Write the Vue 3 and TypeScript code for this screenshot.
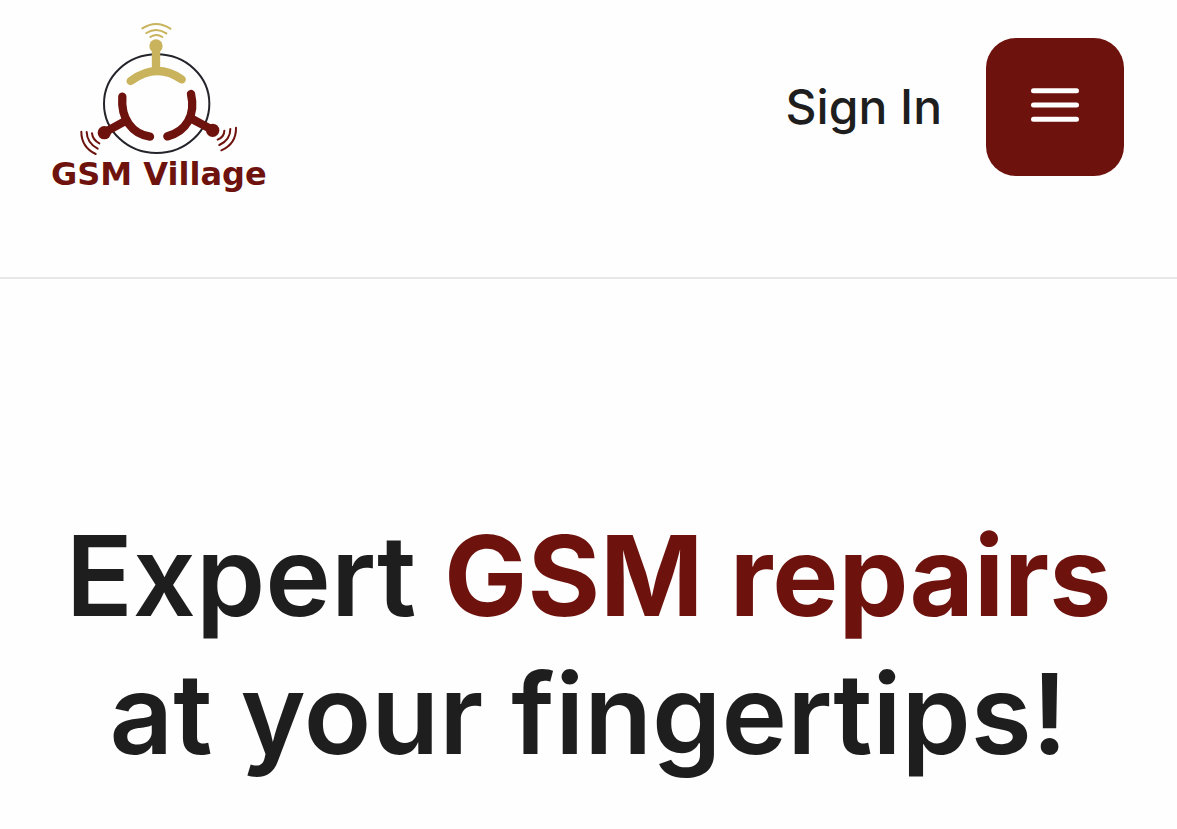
<script setup lang="ts">
import { ref } from 'vue'

const menuOpen = ref<boolean>(false)
</script>

<template>
  <div class="page">
    <header class="header">
      <a class="logo" href="#" aria-label="GSM Village">
        <svg class="logo-mark" viewBox="33 36 642 402" fill="none" stroke-linecap="round" aria-hidden="true">
          <ellipse cx="350" cy="281" rx="158" ry="148" stroke="#24242b" stroke-width="6" />
          <g stroke="#c9b45d">
            <path d="M272 213Q349 156 425 208" stroke-width="25" />
            <path d="M348 112V184" stroke-width="25" stroke-linecap="butt" />
            <circle cx="348" cy="108" r="20" fill="#c9b45d" stroke="none" />
            <path d="M307 55Q349 28 391 56M319 69Q349 50 379 70M331 81Q349 69 367 81" stroke-width="6" />
          </g>
          <g stroke="#6d120c">
            <path d="M247 260C242 326 276 372 330 380" stroke-width="25" />
            <path d="M254 334L194 367" stroke-width="25" stroke-linecap="butt" />
            <circle cx="193" cy="368" r="20" fill="#6d120c" stroke="none" />
            <path d="M124 365Q124 411 167 432M140 366Q141 399 173 416M156 370Q158 389 178 400" stroke-width="6" />
            <path d="M453 252C468 316 438 365 382 379" stroke-width="25" />
            <path d="M456 327L520 361" stroke-width="25" stroke-linecap="butt" />
            <circle cx="518" cy="361" r="20" fill="#6d120c" stroke="none" />
            <path d="M588 353Q589 401 544 421M571 357Q571 390 538 405M553 362Q553 380 533 389" stroke-width="6" />
          </g>
        </svg>
        <span class="logo-name">GSM Village</span>
      </a>
      <nav class="actions">
        <a class="sign-in" href="#">Sign In</a>
        <button
          class="menu-button"
          type="button"
          aria-label="Menu"
          :aria-expanded="menuOpen"
          @click="menuOpen = !menuOpen"
        >
          <svg class="menu-icon" viewBox="0 0 48 34" aria-hidden="true">
            <path d="M2.5 2.7H45.5M2.5 17H45.5M2.5 31.3H45.5" stroke="#fff" stroke-width="5" stroke-linecap="round" />
          </svg>
        </button>
      </nav>
    </header>
    <main class="hero">
      <h1 class="title">Expert <strong class="accent">GSM repairs</strong><br />at your fingertips!</h1>
    </main>
  </div>
</template>

<style>
body {
  margin: 0;
  background: #fefefe;
}
</style>

<style scoped>
.page {
  font-family: Inter, "Liberation Sans", sans-serif;
  color: #1e1e1e;
}

.header {
  display: flex;
  align-items: center;
  justify-content: space-between;
  padding: 22px 53px 85px 51px;
  border-bottom: 2px solid #e8e8e8;
}

.logo {
  display: flex;
  flex-direction: column;
  color: #6d120c;
  text-decoration: none;
}

.logo-mark {
  width: 214px;
  height: 134px;
}

.logo-name {
  font-family: "DejaVu Sans", sans-serif;
  font-size: 32px;
  font-weight: 700;
  line-height: 36px;
  white-space: nowrap;
}

.actions {
  display: flex;
  align-items: center;
  gap: 44px;
}

.sign-in {
  font-size: 48px;
  font-weight: 500;
  line-height: 56px;
  color: inherit;
  text-decoration: none;
  white-space: nowrap;
}

.menu-button {
  display: flex;
  align-items: center;
  justify-content: center;
  width: 138px;
  height: 138px;
  padding: 0 0 4px;
  border: 0;
  border-radius: 30px;
  background: #6e120d;
  cursor: pointer;
}

.menu-icon {
  width: 48px;
  height: 34px;
}

.hero {
  padding: 228px 32px 46px;
}

.title {
  margin: 0;
  font-size: 111px;
  font-weight: 600;
  line-height: 138px;
  text-align: center;
}

.accent {
  font-weight: 700;
  color: #6e120d;
}
</style>
